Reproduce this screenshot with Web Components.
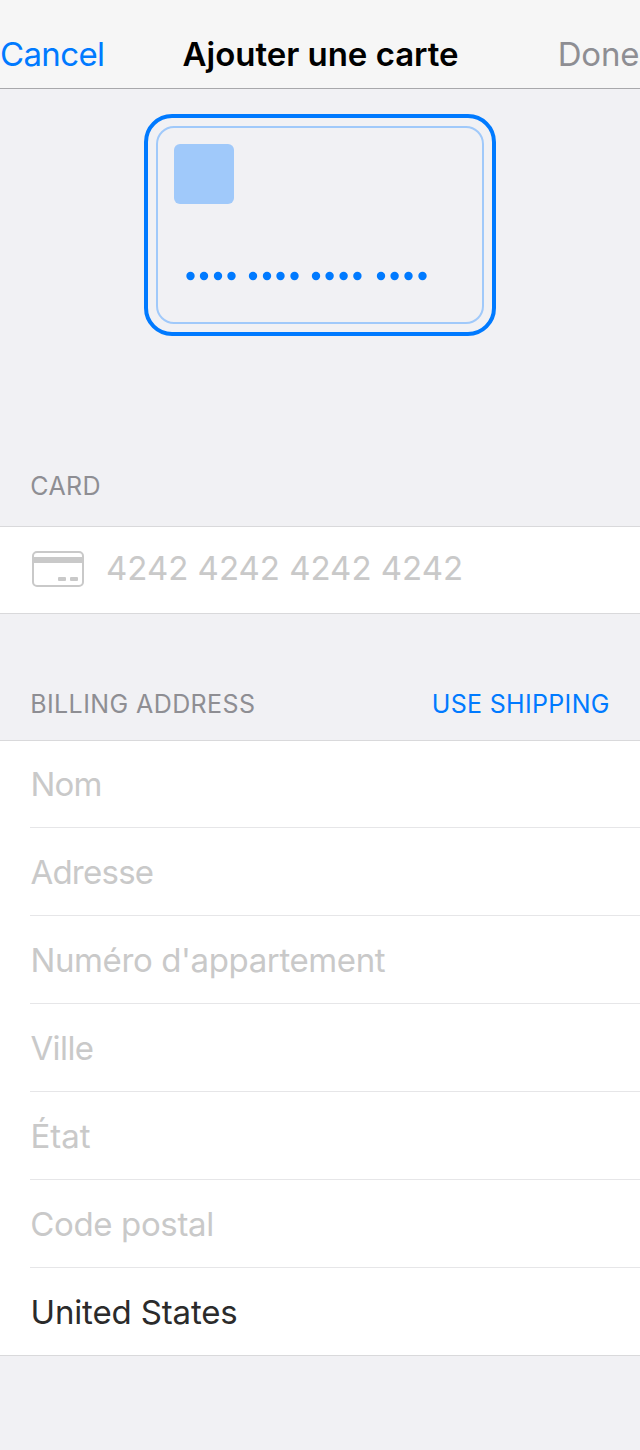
<!DOCTYPE html>
<html lang="fr">
<head>
<meta charset="utf-8">
<title>Ajouter une carte</title>
<style>
body{margin:0;background:#f1f1f4;font-family:Inter,"Liberation Sans",sans-serif}
</style>
</head>
<body>
<add-card-page></add-card-page>
<script>
// Single-line label. "start" and "ink" give the left edge and width of the glyphs,
// and tracking is derived from the metrics of the installed font.
const pen = document.createElement('canvas').getContext('2d');
class UiLabel extends HTMLElement {
  connectedCallback() {
    if (this.shadowRoot) return;
    const root = this.attachShadow({mode: 'open'});
    const size = +(this.getAttribute('size') || 33);
    const weight = this.getAttribute('weight') || 400;
    const text = this.textContent;
    pen.font = `${weight} ${size}px Inter, "Liberation Sans", sans-serif`;
    const m = pen.measureText(text);
    const ink = m.actualBoundingBoxRight + m.actualBoundingBoxLeft;
    const track = (+this.getAttribute('ink') - ink) / (text.length - 1);
    const left = +this.getAttribute('start') + m.actualBoundingBoxLeft;
    root.innerHTML = `<style>
      :host{display:block;white-space:nowrap;font-size:${size}px;font-weight:${weight};line-height:40px;
        letter-spacing:${track.toFixed(3)}px;margin-left:${left.toFixed(2)}px}
    </style><slot></slot>`;
  }
}
customElements.define('ui-label', UiLabel);

const define = (name, html) => customElements.define(name, class extends HTMLElement {
  constructor() {
    super();
    this.attachShadow({mode: 'open'}).innerHTML = html;
  }
});

define('nav-bar', `<style>
  :host{display:grid;grid-template-columns:183px 375px 82px;height:89px;box-sizing:border-box;
    padding-top:34px;background:#f6f6f6;border-bottom:1px solid #a8a8ab;overflow:hidden}
  .cancel{color:#007aff}.title{color:#000}.done{color:#8e8e93}
</style>
<div class="cancel"><slot name="left"></slot></div>
<div class="title"><slot></slot></div>
<div class="done"><slot name="right"></slot></div>`);

const dots = [190.5,204,218,231.5,253,267,280.5,294.5,316,329.6,343.6,357.4,381,394.6,408.5,422.5]
  .map(x => `<circle cx="${x - 158}" cy="5" r="4.2"/>`).join('');
define('card-preview', `<style>
  :host{display:block;box-sizing:border-box;width:352px;height:222px;margin:25px auto 0;
    border:4px solid #007aff;border-radius:28px;padding:8px}
  .face{box-sizing:border-box;height:198px;border:2px solid #a0c9fa;border-radius:18px;padding-top:16px}
  .logo{width:60px;height:60px;border-radius:6px;background:#a0c9fa;margin-left:16px}
  svg{display:block;margin-top:67px;fill:#007aff}
</style>
<div class="face"><div class="logo"></div><svg width="324" height="10">${dots}</svg></div>`);

define('section-header', `<style>
  :host{display:grid;grid-template-columns:320px 320px;color:#8e8e93;height:60px}
  .action{color:#007aff}
</style><slot></slot><div class="action"><slot name="action"></slot></div>`);

define('form-list', `<style>
  :host{display:block;background:#fff;border:solid #d9d9db;border-width:1px 0}
</style><slot></slot>`);

define('form-row', `<style>
  :host{display:flex;box-sizing:border-box;height:88px;padding-top:24px;color:#c9c9c9}
  :host([first]){height:87px;padding-top:23px}
  :host([last]){height:87px}
  :host([filled]){color:#2b2b2b}
  :host([divided]){background:linear-gradient(#e6e6e8,#e6e6e8) 30px 100%/100% 1px no-repeat}
  :host([card]){height:86px;padding-top:21px}
</style><slot></slot>`);

define('card-icon', `<style>
  :host{display:block;width:52px;height:36px;margin:3px 0 0 32px}
  svg{display:block}
</style>
<svg width="52" height="36" viewBox="0 0 52 36">
  <rect x="1" y="1" width="50" height="34" rx="4" fill="none" stroke="#c9c9c9" stroke-width="2"/>
  <rect x="1" y="6" width="50" height="6" fill="#c9c9c9"/>
  <rect x="26" y="26" width="8" height="4" rx="1" fill="#c9c9c9"/>
  <rect x="38" y="26" width="8" height="4" rx="1" fill="#c9c9c9"/>
</svg>`);

define('add-card-page', `<style>
  :host{display:block;width:640px;height:1450px;overflow:hidden;background:#f1f1f4}
  .card-head{margin-top:130px}
  .billing-head{margin-top:70px;height:56px}
</style>
<nav-bar>
  <ui-label slot="left" start="1" ink="102">Cancel</ui-label>
  <ui-label weight="600" start="-0.4" ink="275.4">Ajouter une carte</ui-label>
  <ui-label slot="right" start="1.7" ink="78.5">Done</ui-label>
</nav-bar>
<card-preview></card-preview>
<section-header class="card-head"><ui-label size="25" start="31.3" ink="68.3">CARD</ui-label></section-header>
<form-list>
  <form-row card><card-icon></card-icon><ui-label start="23" ink="354">4242 4242 4242 4242</ui-label></form-row>
</form-list>
<section-header class="billing-head">
  <ui-label size="25" start="32.2" ink="221.8">BILLING ADDRESS</ui-label>
  <ui-label slot="action" size="25" start="113.8" ink="175">USE SHIPPING</ui-label>
</section-header>
<form-list>
  <form-row first divided><ui-label start="32.5" ink="68">Nom</ui-label></form-row>
  <form-row divided><ui-label start="30.4" ink="122.4">Adresse</ui-label></form-row>
  <form-row divided><ui-label start="32.5" ink="353.3">Numéro d'appartement</ui-label></form-row>
  <form-row divided><ui-label start="30.4" ink="62.4">Ville</ui-label></form-row>
  <form-row divided><ui-label start="32.5" ink="58.3">État</ui-label></form-row>
  <form-row divided><ui-label start="31.2" ink="181">Code postal</ui-label></form-row>
  <form-row last filled><ui-label start="32.5" ink="203.8">United States</ui-label></form-row>
</form-list>`);
</script>
</body>
</html>
